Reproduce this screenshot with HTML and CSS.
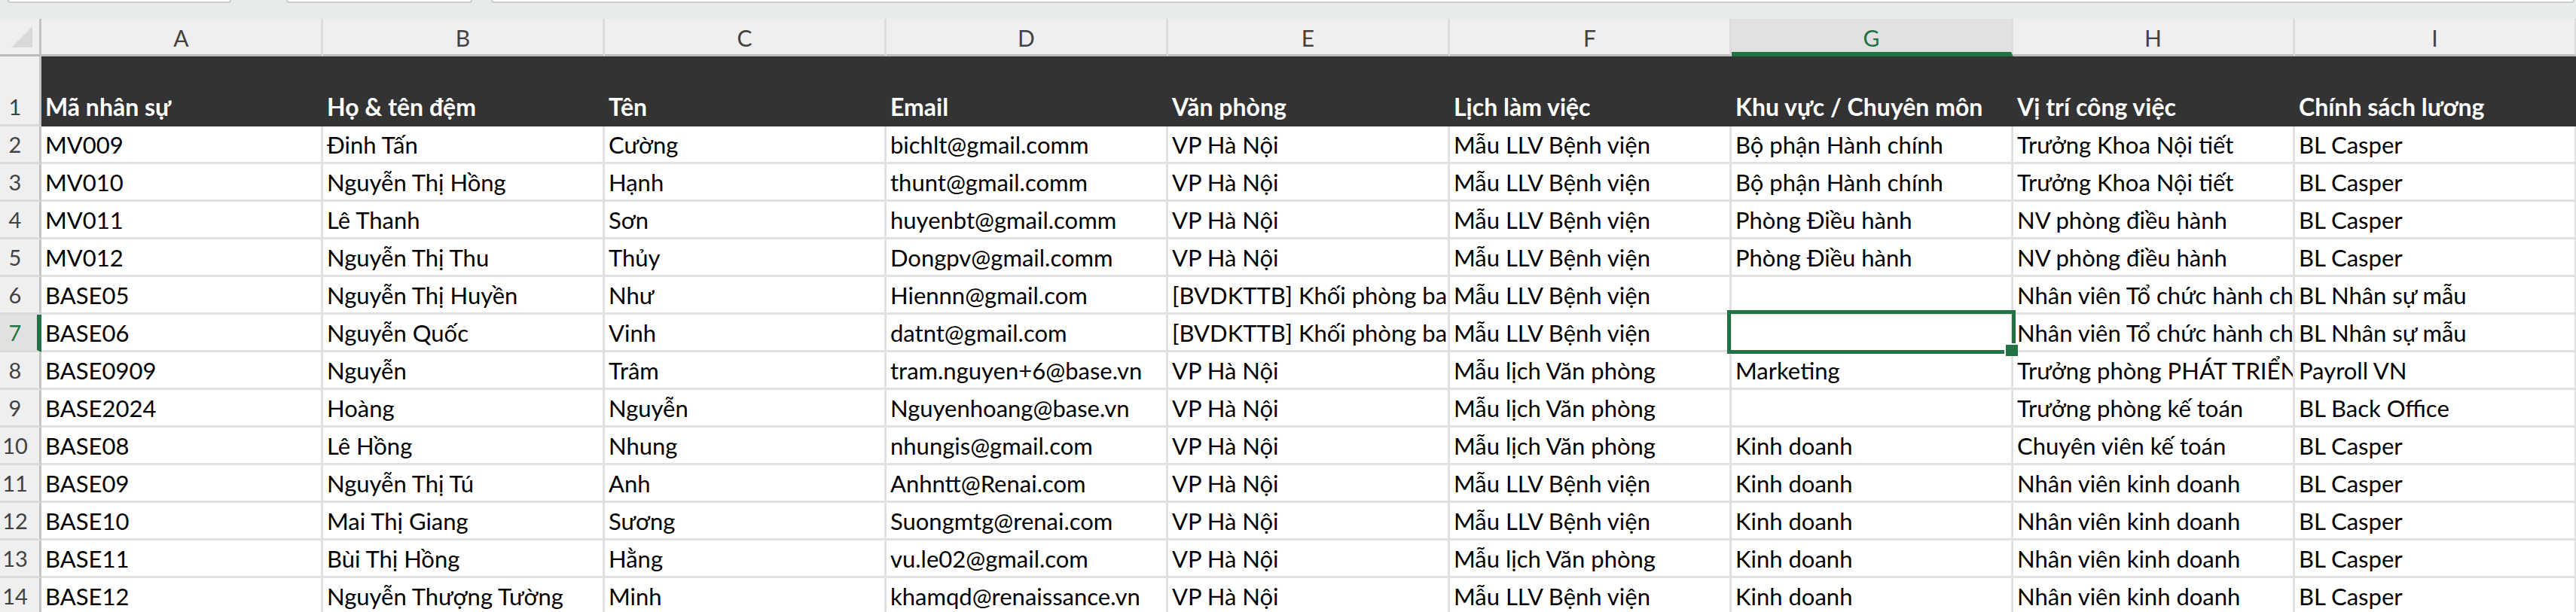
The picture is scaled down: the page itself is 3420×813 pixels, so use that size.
FILE: index.html
```html
<!DOCTYPE html>
<html lang="vi">
<head>
  <meta charset="UTF-8">
  <title>Danh sách nhân sự</title>
  <link rel="stylesheet" href="styles.css">
</head>
<body>
  <!-- bottom edges of the name box / formula bar -->
  <div class="topbar">
    <div class="box box-name"></div>
    <div class="box box-fx"></div>
    <div class="box box-formula"></div>
  </div>

  <div class="sheet">
    <!-- column letters -->
    <div class="corner">
      <svg width="28" height="28" viewBox="0 0 28 28"><polygon points="28,0 28,28 0,28" fill="#d9d9d9"/></svg>
    </div>
    <div class="colhead">A</div>
    <div class="colhead">B</div>
    <div class="colhead">C</div>
    <div class="colhead">D</div>
    <div class="colhead">E</div>
    <div class="colhead">F</div>
    <div class="colhead active">G</div>
    <div class="colhead">H</div>
    <div class="colhead">I</div>

    <!-- row 1 : titles -->
    <div class="rowhead tall">1</div>
    <div class="cell title">Mã nhân sự</div>
    <div class="cell title">Họ &amp; tên đệm</div>
    <div class="cell title">Tên</div>
    <div class="cell title">Email</div>
    <div class="cell title">Văn phòng</div>
    <div class="cell title">Lịch làm việc</div>
    <div class="cell title">Khu vực / Chuyên môn</div>
    <div class="cell title">Vị trí công việc</div>
    <div class="cell title">Chính sách lương</div>

    <div class="rowhead">2</div>
    <div class="cell">MV009</div>
    <div class="cell">Đinh Tấn</div>
    <div class="cell">Cường</div>
    <div class="cell">bichlt@gmail.comm</div>
    <div class="cell">VP Hà Nội</div>
    <div class="cell">Mẫu LLV Bệnh viện</div>
    <div class="cell">Bộ phận Hành chính</div>
    <div class="cell">Trưởng Khoa Nội tiết</div>
    <div class="cell">BL Casper</div>

    <div class="rowhead">3</div>
    <div class="cell">MV010</div>
    <div class="cell">Nguyễn Thị Hồng</div>
    <div class="cell">Hạnh</div>
    <div class="cell">thunt@gmail.comm</div>
    <div class="cell">VP Hà Nội</div>
    <div class="cell">Mẫu LLV Bệnh viện</div>
    <div class="cell">Bộ phận Hành chính</div>
    <div class="cell">Trưởng Khoa Nội tiết</div>
    <div class="cell">BL Casper</div>

    <div class="rowhead">4</div>
    <div class="cell">MV011</div>
    <div class="cell">Lê Thanh</div>
    <div class="cell">Sơn</div>
    <div class="cell">huyenbt@gmail.comm</div>
    <div class="cell">VP Hà Nội</div>
    <div class="cell">Mẫu LLV Bệnh viện</div>
    <div class="cell">Phòng Điều hành</div>
    <div class="cell">NV phòng điều hành</div>
    <div class="cell">BL Casper</div>

    <div class="rowhead">5</div>
    <div class="cell">MV012</div>
    <div class="cell">Nguyễn Thị Thu</div>
    <div class="cell">Thủy</div>
    <div class="cell">Dongpv@gmail.comm</div>
    <div class="cell">VP Hà Nội</div>
    <div class="cell">Mẫu LLV Bệnh viện</div>
    <div class="cell">Phòng Điều hành</div>
    <div class="cell">NV phòng điều hành</div>
    <div class="cell">BL Casper</div>

    <div class="rowhead">6</div>
    <div class="cell">BASE05</div>
    <div class="cell">Nguyễn Thị Huyền</div>
    <div class="cell">Như</div>
    <div class="cell">Hiennn@gmail.com</div>
    <div class="cell">[BVDKTTB] Khối phòng ban chức năng</div>
    <div class="cell">Mẫu LLV Bệnh viện</div>
    <div class="cell"></div>
    <div class="cell">Nhân viên Tổ chức hành chính</div>
    <div class="cell">BL Nhân sự mẫu</div>

    <div class="rowhead active">7</div>
    <div class="cell">BASE06</div>
    <div class="cell">Nguyễn Quốc</div>
    <div class="cell">Vinh</div>
    <div class="cell">datnt@gmail.com</div>
    <div class="cell">[BVDKTTB] Khối phòng ban chức năng</div>
    <div class="cell">Mẫu LLV Bệnh viện</div>
    <div class="cell"></div>
    <div class="cell">Nhân viên Tổ chức hành chính</div>
    <div class="cell">BL Nhân sự mẫu</div>

    <div class="rowhead">8</div>
    <div class="cell">BASE0909</div>
    <div class="cell">Nguyễn</div>
    <div class="cell">Trâm</div>
    <div class="cell">tram.nguyen+6@base.vn</div>
    <div class="cell">VP Hà Nội</div>
    <div class="cell">Mẫu lịch Văn phòng</div>
    <div class="cell">Marketing</div>
    <div class="cell">Trưởng phòng PHÁT TRIỂN KINH DOANH</div>
    <div class="cell">Payroll VN</div>

    <div class="rowhead">9</div>
    <div class="cell">BASE2024</div>
    <div class="cell">Hoàng</div>
    <div class="cell">Nguyễn</div>
    <div class="cell">Nguyenhoang@base.vn</div>
    <div class="cell">VP Hà Nội</div>
    <div class="cell">Mẫu lịch Văn phòng</div>
    <div class="cell"></div>
    <div class="cell">Trưởng phòng kế toán</div>
    <div class="cell">BL Back Office</div>

    <div class="rowhead">10</div>
    <div class="cell">BASE08</div>
    <div class="cell">Lê Hồng</div>
    <div class="cell">Nhung</div>
    <div class="cell">nhungis@gmail.com</div>
    <div class="cell">VP Hà Nội</div>
    <div class="cell">Mẫu lịch Văn phòng</div>
    <div class="cell">Kinh doanh</div>
    <div class="cell">Chuyên viên kế toán</div>
    <div class="cell">BL Casper</div>

    <div class="rowhead">11</div>
    <div class="cell">BASE09</div>
    <div class="cell">Nguyễn Thị Tú</div>
    <div class="cell">Anh</div>
    <div class="cell">Anhntt@Renai.com</div>
    <div class="cell">VP Hà Nội</div>
    <div class="cell">Mẫu LLV Bệnh viện</div>
    <div class="cell">Kinh doanh</div>
    <div class="cell">Nhân viên kinh doanh</div>
    <div class="cell">BL Casper</div>

    <div class="rowhead">12</div>
    <div class="cell">BASE10</div>
    <div class="cell">Mai Thị Giang</div>
    <div class="cell">Sương</div>
    <div class="cell">Suongmtg@renai.com</div>
    <div class="cell">VP Hà Nội</div>
    <div class="cell">Mẫu LLV Bệnh viện</div>
    <div class="cell">Kinh doanh</div>
    <div class="cell">Nhân viên kinh doanh</div>
    <div class="cell">BL Casper</div>

    <div class="rowhead">13</div>
    <div class="cell">BASE11</div>
    <div class="cell">Bùi Thị Hồng</div>
    <div class="cell">Hằng</div>
    <div class="cell">vu.le02@gmail.com</div>
    <div class="cell">VP Hà Nội</div>
    <div class="cell">Mẫu lịch Văn phòng</div>
    <div class="cell">Kinh doanh</div>
    <div class="cell">Nhân viên kinh doanh</div>
    <div class="cell">BL Casper</div>

    <div class="rowhead">14</div>
    <div class="cell">BASE12</div>
    <div class="cell">Nguyễn Thượng Tường</div>
    <div class="cell">Minh</div>
    <div class="cell">khamqd@renaissance.vn</div>
    <div class="cell">VP Hà Nội</div>
    <div class="cell">Mẫu LLV Bệnh viện</div>
    <div class="cell">Kinh doanh</div>
    <div class="cell">Nhân viên kinh doanh</div>
    <div class="cell">BL Casper</div>

    <!-- active cell G7 -->
    <div class="selection"></div>
    <div class="fill-handle"></div>
  </div>
</body>
</html>
```

FILE: styles.css
```css
html, body {
  margin: 0;
  padding: 0;
  background: #ffffff;
  overflow: hidden;
}
body {
  width: 3420px;
  height: 813px;
  font-family: Lato, "Noto Sans", sans-serif;
}

.topbar {
  height: 25px;
  background: #e8ebeb;
  display: flex;
  align-items: flex-start;
}
.box {
  height: 2px;
  background: #ffffff;
  border: 2px solid #cdcdcd;
  border-top: none;
  border-radius: 0 0 9px 9px;
}
.box-name { margin-left: 10px; width: 293px; }
.box-fx { margin-left: 73px; width: 243px; }
.box-formula { margin-left: 25px; flex: 1; margin-right: 2px; }

.sheet {
  position: relative;
  display: grid;
  grid-template-columns: 55px repeat(9, 374px);
  grid-template-rows: 50px 93px;
  grid-auto-rows: 50px;
}

.corner {
  background: #efefef;
  border-right: 3px solid #c4c4c4;
  border-bottom: 3px solid #bdbdbd;
  box-sizing: border-box;
  display: flex;
  align-items: flex-start;
  padding: 10px 0 0 15px;
}

.colhead {
  box-sizing: border-box;
  background: #efefef;
  border-right: 3px solid #dcdcdc;
  border-bottom: 3px solid #bdbdbd;
  color: #424242;
  font-size: 30px;
  line-height: 30px;
  text-align: center;
  padding-top: 10px;
}
.colhead.active {
  background: #e1e1e1;
  color: #217346;
  border-bottom: 6px solid #217346;
}

.rowhead {
  box-sizing: border-box;
  background: #efefef;
  border-right: 3px solid #c4c4c4;
  border-bottom: 3px solid #dadada;
  color: #424242;
  font-size: 29px;
  line-height: 30px;
  display: flex;
  align-items: flex-end;
  justify-content: center;
  padding: 0 12px 8px 0;
  white-space: nowrap;
}
.rowhead.active {
  background: #e1e1e1;
  color: #217346;
  border-right: 6px solid #217346;
  padding-right: 9px;
}

.cell {
  box-sizing: border-box;
  border-right: 3px solid #e1e1e1;
  border-bottom: 3px solid #e1e1e1;
  color: #000000;
  font-size: 31px;
  line-height: 30px;
  display: flex;
  align-items: flex-end;
  padding: 0 0 8px 5px;
  white-space: nowrap;
  overflow: hidden;
}
.cell.title {
  background: #333333;
  border-color: #333333;
  color: #ffffff;
  font-weight: bold;
  font-size: 32px;
}

.selection {
  position: absolute;
  left: 2293px;
  top: 387px;
  width: 383px;
  height: 58px;
  box-sizing: border-box;
  border: 5px solid #217346;
}
.fill-handle {
  position: absolute;
  left: 2661px;
  top: 431px;
  width: 16px;
  height: 15px;
  background: #217346;
  border-top: 2px solid #ffffff;
  border-left: 2px solid #ffffff;
}
```
